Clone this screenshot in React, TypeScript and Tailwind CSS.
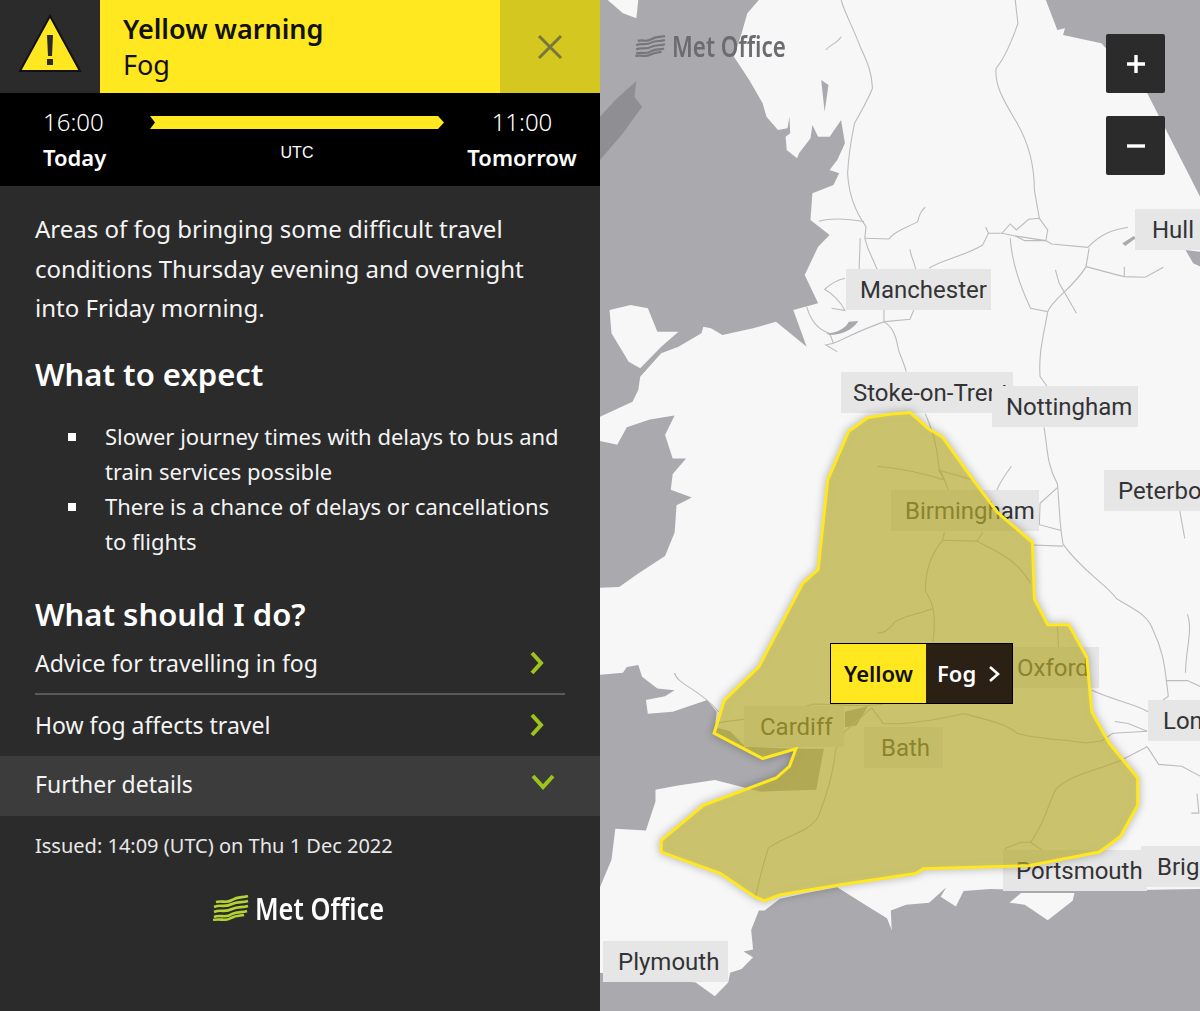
import React from "react";

const PLEX = "[font-family:'Noto_Sans','Open_Sans',sans-serif]";

function Waves({ color, className }: { color: string; className: string }) {
  return (
    <svg viewBox="0 0 36 26" className={className} fill="none" stroke={color} strokeWidth="2.6">
      <path d="M3 7 C10 5 12 9 19 5 C25 1 29 3 35 1" />
      <path d="M1 12 C8 9 12 13 19 9 C25 6 29 8 35 6" />
      <path d="M1 17 C8 14 12 18 19 14 C25 11 29 13 35 11" />
      <path d="M1 22 C8 19 12 24 19 19 C25 16 29 18 34 16" />
      <path d="M0 25 C8 23 12 27 18 23 C24 20 27 21 31 20" />
    </svg>
  );
}

function Row({ text, divider }: { text: string; divider?: boolean }) {
  return (
    <div className={`mx-[35px] flex h-[61px] items-center justify-between ${divider ? "border-b-2 border-[#5a5a5a]" : ""}`}>
      <span className="text-[23px] text-[#f4f4f4]">{text}</span>
      <svg width="16" height="24" viewBox="0 0 16 24" fill="none" stroke="#9fc31d" strokeWidth="4" className="mr-[20px]">
        <path d="M3 2 L12 12 L3 22" />
      </svg>
    </div>
  );
}

function Label({ text, className }: { text: string; className: string }) {
  return (
    <div className={`absolute flex h-[41px] items-center bg-[#e6e6e6] text-[24px] whitespace-nowrap text-[#333336] [font-family:Roboto,sans-serif] ${className}`}>
      {text}
    </div>
  );
}

const roadsTop = [
  "M630 0 C640 40 660 80 680 140 C695 180 710 210 712 265 C700 300 680 340 665 370 C660 400 650 450 647 520 C650 590 670 640 695 680 L692 715 L700 745 L725 810",
  "M572 664 C600 655 640 655 690 665",
  "M692 715 L755 717 C770 690 810 680 830 665 C835 640 840 630 850 622",
  "M680 715 L677 810",
  "M810 748 C812 770 820 780 825 808",
  "M860 805 C890 780 950 770 1000 735 L1015 700 L1008 682",
  "M1015 700 L1050 700 L1072 672 L1088 690 L1120 658 L1148 655 L1170 690 L1165 722 L1110 722 L1085 708 L1050 700",
  "M1085 708 L1165 722 L1180 732 L1275 742 C1310 700 1340 690 1380 682",
  "M1085 0 L1092 70 C1080 110 1060 170 1035 205 C1030 260 1060 310 1090 370 C1120 430 1135 500 1135 570 L1148 655",
  "M1072 715 C1075 770 1090 840 1125 925 L1170 935 C1160 1000 1145 1060 1150 1130 L1175 1170",
  "M1170 935 C1180 900 1240 860 1270 800 L1278 745",
  "M1190 810 L1200 850 L1245 940",
  "M1270 800 C1320 815 1350 825 1370 830 L1425 832 L1472 802",
  "M1370 800 L1370 830",
  "M640 835 C620 840 600 855 587 868 C605 880 630 905 640 932 L605 925",
  "M742 930 L742 965 C770 985 775 1020 780 1050 C785 1070 795 1090 800 1115",
  "M820 930 L810 958 L745 965 C700 980 650 1010 610 1030 L590 1035 L620 1055",
  "M540 920 C550 960 570 990 600 1000 L610 1030",
  "M590 150 C600 135 620 130 630 110",
];

const roadsBottom = [
  "M850 35 C860 60 880 100 885 170 L910 230",
  "M725 170 C780 175 850 190 900 205 L885 180 L975 205",
  "M1075 170 C1060 190 1045 210 1035 235",
  "M1160 70 C1170 120 1165 160 1195 215 C1200 260 1200 320 1210 370 C1260 440 1320 470 1350 510 C1400 540 1430 550 1445 590 C1470 640 1475 680 1480 720 L1535 720 L1568 735",
  "M1195 225 L1150 265 L1148 320 L1205 335",
  "M1130 372 L1210 375",
  "M1515 285 L1528 355",
  "M900 340 L895 360 C860 400 850 450 850 490 C870 520 880 550 870 620",
  "M1000 340 L985 362 L895 360",
  "M985 362 C1040 390 1090 410 1125 470",
  "M870 535 C830 550 790 555 770 570 C755 590 740 600 725 598",
  "M1195 580 L1198 635",
  "M1285 745 C1340 770 1400 780 1432 800",
  "M1480 720 L1485 760 L1430 800",
  "M1345 825 L1380 830 L1430 850 L1340 855 L1310 875 L1270 880 C1200 870 1140 870 1090 855 C1060 830 1010 820 950 805 C880 820 800 835 740 830 L710 790",
  "M1430 890 L1460 935 L1520 940 L1568 965",
  "M1430 890 L1360 925 C1300 950 1230 960 1190 1000 C1170 1040 1160 1090 1125 1135 L1100 1135 L1060 1150 L1055 1165",
  "M1125 1135 L1155 1155",
  "M710 790 L640 850 L615 900 C610 960 590 1020 570 1070 C545 1110 480 1120 440 1150 C420 1210 415 1240 405 1280",
  "M195 700 C200 730 260 740 310 800",
  "M300 830 C350 820 420 820 560 780 C620 780 680 790 740 780",
  "M1535 550 C1550 590 1530 640 1530 700",
  "M1560 1010 L1565 1060 L1545 1060",
];

export default function App() {
  return (
    <div className="flex h-[1011px] w-[1200px] overflow-hidden">
      <div className={`flex w-[600px] shrink-0 flex-col bg-[#2b2b2b] text-white ${PLEX}`}>
        <div className="flex h-[93px] shrink-0">
          <div className="flex w-[100px] items-center justify-center pb-[8px]">
            <svg width="64" height="60" viewBox="0 0 64 60">
              <path d="M32 3 L62 58 L2 58 Z" fill="#ffe81f" stroke="#111" strokeWidth="2" />
              <path d="M29 22 H35 L34 43 H30 Z M29 46 H35 V52 H29 Z" fill="#2b2b2b" />
            </svg>
          </div>
          <div className="flex flex-1 flex-col justify-center bg-[#ffe81f] pl-[23px] text-[#111]">
            <div className="text-[27px] leading-[36px] font-semibold">Yellow warning</div>
            <div className="text-[27px] leading-[36px]">Fog</div>
          </div>
          <div className="flex w-[100px] items-center justify-center bg-[#d4c820]">
            <svg width="26" height="26" viewBox="0 0 26 26" stroke="#77763e" strokeWidth="3">
              <path d="M2 2 L24 24 M24 2 L2 24" />
            </svg>
          </div>
        </div>
        <div className="flex h-[93px] shrink-0 bg-black">
          <div className="flex w-[150px] flex-col pt-[12px] pl-[43px]">
            <span className="text-[24px] leading-[34px] font-light">16:00</span>
            <span className="text-[22px] leading-[36px] font-semibold">Today</span>
          </div>
          <div className="flex w-[294px] flex-col items-center pt-[23px]">
            <svg width="294" height="13" viewBox="0 0 294 13">
              <path d="M0 0 H288 L294 6.5 L288 13 H0 L5 6.5 Z" fill="#ffe81f" />
            </svg>
            <span className="mt-[14px] text-[16px] leading-[20px] [font-family:'Liberation_Sans',sans-serif]">UTC</span>
          </div>
          <div className="flex flex-1 flex-col items-center pt-[12px] pr-[0px]">
            <span className="text-[24px] leading-[34px] font-light">11:00</span>
            <span className="text-[22px] leading-[36px] font-semibold">Tomorrow</span>
          </div>
        </div>
        <div className="px-[35px] pt-[23px]">
          <p className="text-[24px] leading-[39.5px] text-[#f4f4f4]">
            Areas of fog bringing some difficult travel conditions Thursday evening and overnight into Friday morning.
          </p>
          <h2 className="mt-[25px] text-[31px] leading-[42px] font-semibold">What to expect</h2>
          <ul className="mt-[24px] text-[22px] leading-[35px] text-[#f4f4f4]">
            <li className="relative pl-[70px]">
              <span className="absolute top-[14px] left-[33px] size-[8px] bg-white" />
              Slower journey times with delays to bus and train services possible
            </li>
            <li className="relative pl-[70px]">
              <span className="absolute top-[14px] left-[33px] size-[8px] bg-white" />
              There is a chance of delays or cancellations to flights
            </li>
          </ul>
          <h2 className="mt-[34px] text-[31px] leading-[42px] font-semibold">What should I do?</h2>
        </div>
        <div className="mt-[-1px]">
          <Row text="Advice for travelling in fog" divider />
          <Row text="How fog affects travel" />
          <div className="flex h-[60px] items-center justify-between bg-[#3c3c3c] px-[35px] pb-[3px]">
            <span className="text-[23px] text-[#f4f4f4]">Further details</span>
            <svg width="24" height="17" viewBox="0 0 24 17" fill="none" stroke="#9fc31d" strokeWidth="4" className="mr-[10px] mb-[4px]">
              <path d="M2 2 L12 13 L22 2" />
            </svg>
          </div>
        </div>
        <p className="mt-[16px] px-[35px] text-[20px] leading-[28px] text-[#e8e8e8]">Issued: 14:09 (UTC) on Thu 1 Dec 2022</p>
        <div className="mt-[30px] flex items-center justify-center gap-[6px]">
          <Waves color="#b6d334" className="h-[26px] w-[36px]" />
          <span className="w-[132px] text-[31px] leading-[36px] font-semibold whitespace-nowrap">
            <span className="inline-block origin-left scale-x-[0.82]">Met Office</span>
          </span>
        </div>
      </div>

      <div className="relative h-[1011px] w-[600px] shrink-0 overflow-hidden bg-[#f7f7f7]">
        <svg className="absolute inset-0" width="600" height="1011" viewBox="0 0 600 1011">
          <g transform="scale(0.3827,0.3333)" fill="#aaaaae">
            <path d="M0 0 H415 L385 40 L370 100 L350 170 L390 240 L425 310 L435 350 L465 390 L490 385 L495 350 L497 400 L485 410 L488 450 L515 475 L520 460 L550 415 L555 375 L570 410 L600 410 L630 360 L640 430 L620 480 L600 510 L625 520 L610 555 L555 580 L550 660 L600 705 L570 740 L535 825 L570 910 L505 930 L540 1040 L460 965 L400 985 L320 1005 L290 985 L270 980 L265 1000 L205 1040 L160 1060 L105 1130 L100 1170 L85 1205 L0 1250 Z" />
            <path d="M20 0 L60 40 L95 55 L100 0 Z" fill="#f7f7f7" />
            <path d="M25 930 L80 915 L125 925 L150 995 L205 995 L160 1040 L105 1105 L75 1085 L30 1000 Z" fill="#f7f7f7" />
            <path d="M0 985 L25 1030 L0 1040 Z M0 1040 L40 1090 L20 1200 L0 1200 Z" fill="#f7f7f7" opacity="0" />
            <path d="M0 350 L40 300 L95 243 L90 290 L110 320 L60 400 L0 480 Z" fill="#8f8f93" />
            <path d="M578 240 L597 255 L587 335 Z" />
            <path d="M1165 0 L1195 90 L1215 85 L1210 105 L1310 130 L1430 280 L1568 590 V0 Z" />
            <path d="M1365 730 L1395 708 L1400 715 L1372 738 Z M1530 750 L1568 755 V800 L1550 790 Z" />
            <path d="M590 1000 C610 1000 640 990 650 965 L675 963 C660 990 630 1005 600 1005 Z" />
            <g fill="none" stroke="#bcbcbf" strokeWidth="1.1">
              {roadsTop.map((d) => (
                <path key={d} d={d} vectorEffect="non-scaling-stroke" />
              ))}
            </g>
          </g>
          <g transform="translate(0,400) scale(0.3827,0.3897)" fill="#aaaaae">
            <path d="M0 0 H70 L0 40 Z" />
            <path d="M0 105 L45 115 L70 70 L130 50 L195 40 L170 90 L190 150 L225 150 L190 190 L185 230 L240 250 L200 270 L195 340 L170 400 L100 445 L50 480 L0 482 Z" />
            <path d="M0 705 L60 700 L70 685 L100 680 L110 710 L150 740 L195 745 L170 760 L120 770 L125 805 L190 800 L280 770 L305 800 L300 840 L340 850 L380 890 L510 895 L585 895 L565 1000 L420 1005 L400 1000 L300 975 L200 990 L145 1000 L145 1030 L135 1060 L120 1105 L40 1100 L30 1180 L0 1250 Z" />
            <path d="M640 800 L700 785 L670 835 L640 840 Z" />
            <path d="M1568 1255 L1240 1260 L1020 1255 L950 1260 L930 1300 L890 1275 L905 1250 L860 1290 L800 1295 L760 1310 L762 1360 L750 1330 L700 1300 L620 1250 L540 1265 L470 1280 L430 1310 L415 1310 L395 1360 L400 1410 L375 1415 L400 1430 L370 1460 L340 1470 L335 1495 L300 1530 L250 1495 L0 1470 V1568 H1568 Z" />
            <path d="M1070 1290 L1100 1265 L1240 1265 L1235 1285 L1170 1335 L1110 1295 Z" fill="#f7f7f7" />
            <g fill="none" stroke="#bcbcbf" strokeWidth="1.1">
              {roadsBottom.map((d) => (
                <path key={d} d={d} vectorEffect="non-scaling-stroke" />
              ))}
            </g>
          </g>
        </svg>

        <div className="absolute top-[30px] left-[34px] flex items-center gap-[5px] text-[#6c6c70]">
          <Waves color="#77777b" className="h-[22px] w-[33px]" />
          <span className={`w-[118px] text-[28px] leading-[32px] font-semibold whitespace-nowrap ${PLEX}`}>
            <span className="inline-block origin-left scale-x-[0.8]">Met Office</span>
          </span>
        </div>

        <Label text="Manchester" className="top-[269px] left-[246px] w-[145px] pl-[14px]" />
        <Label text="Hull" className="top-[209px] left-[535px] w-[65px] pl-[17px]" />
        <Label text="Stoke-on-Trent" className="top-[372px] left-[241px] w-[172px] pl-[12px]" />
        <Label text="Nottingham" className="top-[386px] left-[392px] w-[146px] pl-[14px]" />
        <Label text="Peterborough" className="top-[470px] left-[504px] w-[150px] pl-[14px]" />
        <Label text="Birmingham" className="top-[490px] left-[291px] w-[148px] pl-[14px]" />
        <Label text="Oxford" className="top-[647px] left-[400px] w-[99px] pl-[17px]" />
        <Label text="London" className="top-[700px] left-[548px] w-[100px] pl-[15px]" />
        <Label text="Cardiff" className="top-[706px] left-[144px] w-[100px] pl-[16px]" />
        <Label text="Bath" className="top-[727px] left-[264px] w-[79px] pl-[17px]" />
        <Label text="Brighton" className="top-[846px] left-[541px] w-[110px] pl-[16px]" />
        <Label text="Portsmouth" className="top-[850px] left-[403px] w-[144px] pl-[13px]" />
        <Label text="Plymouth" className="top-[941px] left-[3px] w-[125px] pl-[15px]" />

        <svg className="absolute inset-0 drop-shadow-[0_0_4px_rgba(0,0,0,0.35)]" width="600" height="1011" viewBox="0 0 600 1011">
          <g transform="translate(0,400) scale(0.3827,0.3897)">
            <path
              d="M810 32 L860 75 L895 95 L975 205 L1040 290 L1130 365 L1135 510 L1170 577 L1225 577 L1272 660 L1285 800 L1330 880 L1405 970 L1405 1040 L1360 1120 L1305 1160 L1120 1195 L845 1203 L825 1215 L620 1245 L470 1270 L430 1285 L405 1275 L315 1215 L160 1160 L160 1130 L270 1040 L460 970 L495 940 L512 895 L425 920 L298 855 L325 770 L415 685 L530 470 L570 435 L595 205 L650 80 L700 45 L770 35 Z"
              fill="#cdc030"
              fillOpacity="0.6"
              stroke="#ffe81f"
              strokeWidth="3"
              vectorEffect="non-scaling-stroke"
            />
          </g>
        </svg>

        <div className={`absolute top-[643px] left-[230px] flex h-[61px] w-[183px] border border-black text-[22px] font-semibold ${PLEX}`}>
          <div className="flex w-[95px] items-center justify-center bg-[#ffe81f] text-[#111]">Yellow</div>
          <div className="flex flex-1 items-center gap-[12px] bg-[#2a2013] pl-[11px] text-white">
            Fog
            <svg width="12" height="18" viewBox="0 0 12 18" fill="none" stroke="white" strokeWidth="2.6">
              <path d="M2 2 L10 9 L2 16" />
            </svg>
          </div>
        </div>

        <div className="absolute top-[34px] left-[506px] flex flex-col gap-[23px]">
          <div className="flex h-[59px] w-[59px] items-center justify-center rounded-[2px] bg-[#2b2b2b]">
            <svg width="18" height="18" viewBox="0 0 18 18" stroke="white" strokeWidth="3.4">
              <path d="M9 0 V18 M0 9 H18" />
            </svg>
          </div>
          <div className="flex h-[59px] w-[59px] items-center justify-center rounded-[2px] bg-[#2b2b2b]">
            <svg width="18" height="4" viewBox="0 0 18 4" stroke="white" strokeWidth="3.4">
              <path d="M0 2 H18" />
            </svg>
          </div>
        </div>
      </div>
    </div>
  );
}
